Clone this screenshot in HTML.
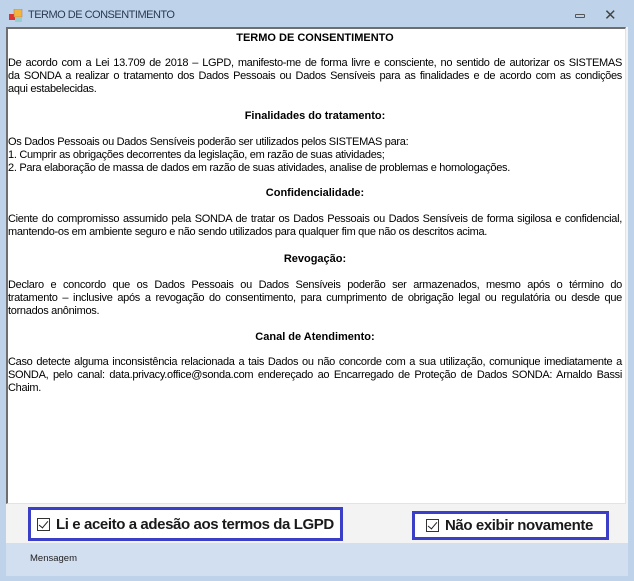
<!DOCTYPE html>
<html><head><meta charset="utf-8"><style>
*{margin:0;padding:0;box-sizing:border-box}
body{width:634px;height:581px;background:#bed3ea;font-family:"Liberation Sans","DejaVu Sans",sans-serif;position:relative;overflow:hidden}
.title{position:absolute;left:28px;top:9px;font-size:11px;letter-spacing:-0.5px;color:#2a3a50}
.client{position:absolute;left:6px;top:27px;width:622px;height:549px;background:#f3f3f3}
.box{position:absolute;left:6px;top:27px;width:620px;height:477px;background:#fff;border-left:2px solid #6e6e6e;border-top:2px solid #6e6e6e;border-right:1px solid #e3e3e3;border-bottom:1px solid #e3e3e3;overflow:hidden}
.t{position:absolute;left:0px;width:614px;font-size:11px;letter-spacing:-0.3px;color:#000;line-height:13px;white-space:nowrap}
.j{text-align:justify;text-align-last:justify}
.h{text-align:center;font-weight:bold;letter-spacing:0}
.status{position:absolute;left:6px;top:543px;width:622px;height:33px;background:#d2dff0}
.cb{position:absolute;border:3px solid #3b3fc8;background:#fff;font-size:15px;font-weight:bold;color:#1a1a1a;display:flex;align-items:center;white-space:nowrap;letter-spacing:-0.4px}
.cb span.k{display:inline-block;width:13px;height:13px;border:1px solid #333;margin-right:6px;position:relative;background:#fff;flex:none}
.cb span.k:after{content:"";position:absolute;left:3px;top:0px;width:4px;height:8px;border-right:1.5px solid #222;border-bottom:1.5px solid #222;transform:rotate(40deg)}
</style></head><body>
<svg style="position:absolute;left:9px;top:9px" width="14" height="14"><rect x="0" y="5" width="6" height="6" fill="#d33"/><rect x="5" y="0" width="8" height="8" fill="#f4b43a" stroke="#a77" stroke-width=".5"/><rect x="6" y="8" width="7" height="5" fill="#9cc"/></svg>
<div class="title">TERMO DE CONSENTIMENTO</div>
<div style="position:absolute;left:575px;top:14px;width:10px;height:4px;border:1.5px solid #555;border-radius:1px"></div>
<div style="position:absolute;left:604px;top:6px;font-size:15px;font-weight:bold;color:#444">✕</div>
<div class="client"></div>
<div class="box">
<div class="t h" style="top:3px">TERMO DE CONSENTIMENTO</div>
<div class="t j" style="top:28px">De acordo com a Lei 13.709 de 2018 – LGPD, manifesto-me de forma livre e consciente, no sentido de autorizar os SISTEMAS</div>
<div class="t j" style="top:41px">da SONDA a realizar o tratamento dos Dados Pessoais ou Dados Sensíveis para as finalidades e de acordo com as condições</div>
<div class="t" style="top:54px">aqui estabelecidas.</div>
<div class="t h" style="top:81px">Finalidades do tratamento:</div>
<div class="t" style="top:107px">Os Dados Pessoais ou Dados Sensíveis poderão ser utilizados pelos SISTEMAS para:</div>
<div class="t" style="top:120px">1. Cumprir as obrigações decorrentes da legislação, em razão de suas atividades;</div>
<div class="t" style="top:133px">2. Para elaboração de massa de dados em razão de suas atividades, analise de problemas e homologações.</div>
<div class="t h" style="top:158px">Confidencialidade:</div>
<div class="t j" style="top:184px">Ciente do compromisso assumido pela SONDA de tratar os Dados Pessoais ou Dados Sensíveis de forma sigilosa e confidencial,</div>
<div class="t" style="top:197px">mantendo-os em ambiente seguro e não sendo utilizados para qualquer fim que não os descritos acima.</div>
<div class="t h" style="top:224px">Revogação:</div>
<div class="t j" style="top:250px">Declaro e concordo que os Dados Pessoais ou Dados Sensíveis poderão ser armazenados, mesmo após o término do</div>
<div class="t j" style="top:263px">tratamento – inclusive após a revogação do consentimento, para cumprimento de obrigação legal ou regulatória ou desde que</div>
<div class="t" style="top:276px">tornados anônimos.</div>
<div class="t h" style="top:302px">Canal de Atendimento:</div>
<div class="t j" style="top:327px">Caso detecte alguma inconsistência relacionada a tais Dados ou não concorde com a sua utilização, comunique imediatamente a</div>
<div class="t j" style="top:340px">SONDA, pelo canal: data.privacy.office@sonda.com endereçado ao Encarregado de Proteção de Dados SONDA: Arnaldo Bassi</div>
<div class="t" style="top:353px">Chaim.</div>
</div>
<div class="cb" style="left:28px;top:507px;width:315px;height:34px;padding-left:6px"><span class="k"></span>Li e aceito a adesão aos termos da LGPD</div>
<div class="cb" style="left:412px;top:511px;width:197px;height:29px;padding-left:11px"><span class="k"></span>Não exibir novamente</div>
<div class="status"></div>
<div style="position:absolute;left:30px;top:553px;font-size:9.5px;color:#222">Mensagem</div>
</body></html>
